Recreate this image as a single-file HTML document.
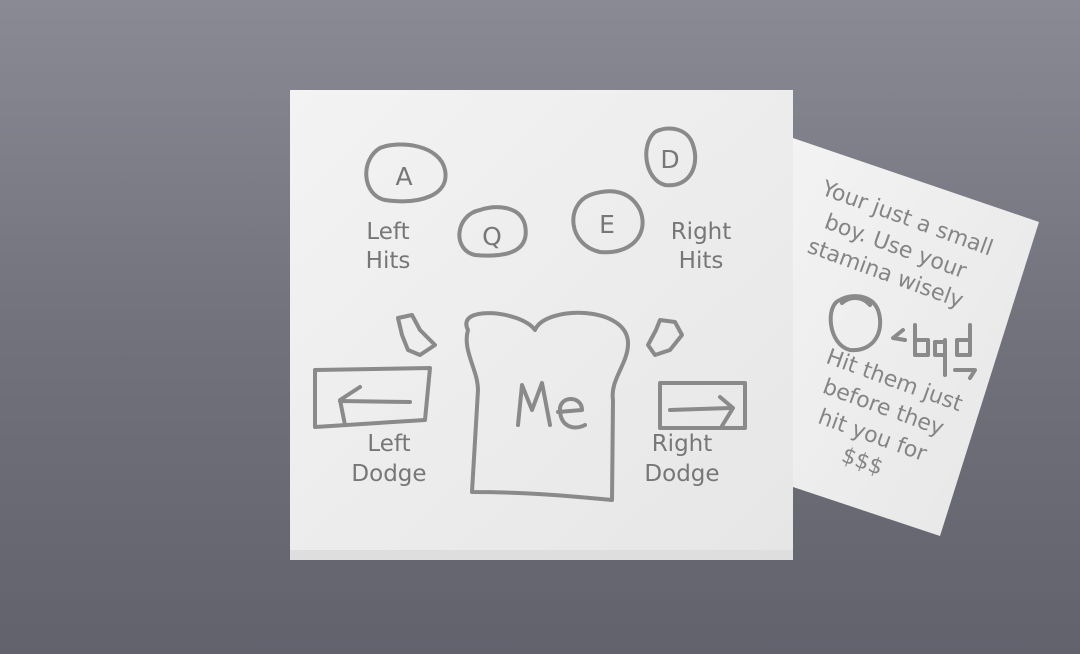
<!DOCTYPE html>
<html><head><style>
body{margin:0;width:1080px;height:654px;overflow:hidden;background:linear-gradient(180deg,#8a8a95 0%,#72727d 50%,#62626d 100%);font-family:"DejaVu Sans","Liberation Sans",sans-serif;}
svg{position:absolute;left:0;top:0}
</style></head><body>
<svg width="1080" height="654" viewBox="0 0 1080 654">
<defs><linearGradient id="g" x1="0" y1="0" x2="1" y2="1"><stop offset="0" stop-color="#f3f3f3"/><stop offset="1" stop-color="#e6e6e6"/></linearGradient></defs>
<polygon points="790,137 1039,222 940,536 790,486" fill="url(#g)"/>
<rect x="290" y="90" width="503" height="470" fill="url(#g)"/>
<rect x="290" y="550" width="503" height="10" fill="#dedede"/>
<g fill="none" stroke="#8a8a8a" stroke-width="4" stroke-linecap="round" stroke-linejoin="round">
<path d="M380,148 C360,160 362,195 385,200 C420,205 450,195 445,170 C440,145 400,140 380,148Z"/>
<path d="M480,210 C455,215 452,250 475,255 C510,258 530,250 525,225 C520,205 495,205 480,210"/>
<path d="M590,195 C565,205 568,245 600,252 C630,255 650,235 640,210 C630,190 610,188 590,195Z"/>
<path d="M655,132 C640,145 645,180 665,185 C690,188 700,165 693,145 C688,128 668,125 655,132Z"/>
<path d="M398,318 L412,315 L420,330 L435,345 L420,355 L408,350 L402,335 Z"/>
<path d="M660,320 L675,322 L682,335 L670,350 L655,355 L648,345 L656,330 Z"/>
<path d="M315,370 L430,368 L425,420 L315,427 Z"/>
<path d="M410,402 L340,401 M360,387 L340,400 L345,425"/>
<path d="M660,383 L745,383 L745,428 L660,428 L660,383 M670,410 L730,408 M720,397 L733,408 L722,426"/>
<path d="M468,330 C455,305 520,310 535,330 C545,305 630,305 628,345 C627,365 610,380 613,400 L612,500 C560,495 520,492 472,492 L478,390 C478,370 462,350 468,330Z"/>
<path d="M518,425 L522,385 L532,410 L542,383 L550,425 M558,412 L582,410 C582,395 558,395 560,412 C562,428 575,430 585,425"/>
<path d="M840,300 C825,305 828,345 850,350 C875,352 885,330 878,310 C872,295 852,293 840,300Z M842,303 C850,296 862,296 870,305"/>
<path d="M903,330 L893,338 L905,340 M915,325 L915,355 L928,355 L928,340 L915,340 M945,342 L935,342 L935,355 L945,355 L945,340 L945,375 M970,325 L970,355 L957,355 L957,340 L970,340 M955,370 L975,370 L970,378"/>
</g>
<g fill="#777" font-size="23" text-anchor="middle">
<text x="404" y="185" font-size="25">A</text>
<text x="492" y="245" font-size="25">Q</text>
<text x="607" y="233" font-size="25">E</text>
<text x="670" y="168" font-size="25">D</text>
<text x="388" y="239">Left</text><text x="388" y="268">Hits</text>
<text x="701" y="239">Right</text><text x="701" y="268">Hits</text>
<text x="389" y="451">Left</text><text x="389" y="481">Dodge</text>
<text x="682" y="451">Right</text><text x="682" y="481">Dodge</text>
</g>
<g fill="#858585" font-size="22" text-anchor="middle">
<text transform="translate(905,225) rotate(20)">Your just a small</text>
<text transform="translate(893,253) rotate(20)">boy. Use your</text>
<text transform="translate(883,280) rotate(20)">stamina wisely</text>
<text transform="translate(892,387) rotate(20)">Hit them just</text>
<text transform="translate(881,414) rotate(20)">before they</text>
<text transform="translate(870,442) rotate(20)">hit you for</text>
<text transform="translate(860,468) rotate(20)">$$$</text>
</g>
</svg>
</body></html>
